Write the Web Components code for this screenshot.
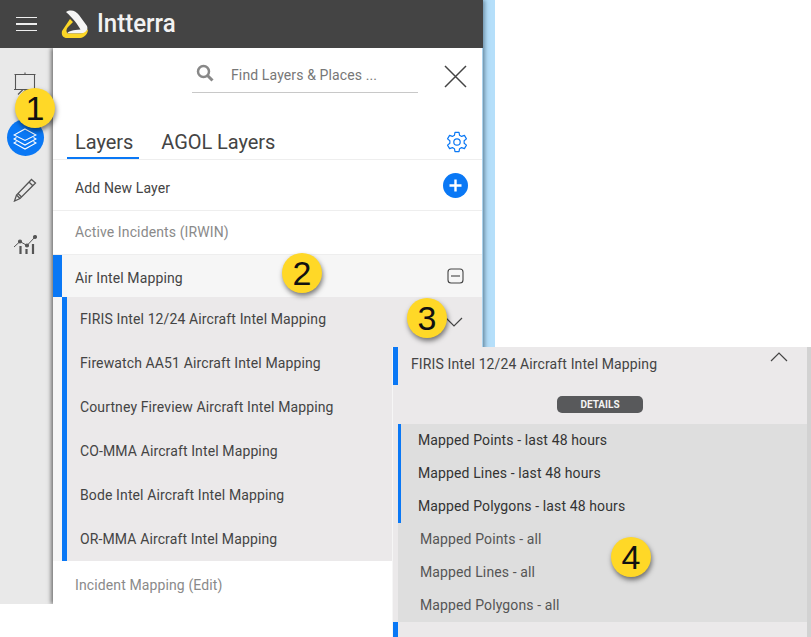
<!DOCTYPE html>
<html>
<head>
<meta charset="utf-8">
<title>Intterra layers</title>
<style>
  html, body { margin: 0; padding: 0; background: #fff; }
  body { font-family: Roboto, "Liberation Sans", sans-serif; width: 811px; height: 637px; overflow: hidden; position: relative; }
</style>
</head>
<body>
<app-shell>
  <top-bar></top-bar>
  <div slot="rail"><side-rail></side-rail></div>
  <layers-panel slot="panel"></layers-panel>
</app-shell>
<layer-details></layer-details>
<note-badge style="left:15px;top:88px">1</note-badge>
<note-badge style="left:282px;top:253px">2</note-badge>
<note-badge style="left:407px;top:298px">3</note-badge>
<note-badge style="left:611px;top:537px">4</note-badge>

<script>
class AppShell extends HTMLElement {
  constructor() {
    super();
    this.attachShadow({ mode: "open" }).innerHTML = `
      <style>
        :host { display: block; width: 495px; height: 604px; background: #b5dffa; overflow: hidden; }
        .app { width: 483px; height: 604px; display: flex; flex-direction: column; box-shadow: 2px 0 4px rgba(40, 70, 90, .5); }
        .body { flex: 1; display: flex; min-height: 0; }
        ::slotted([slot="rail"]) { width: 53px; flex: none; }
        ::slotted([slot="panel"]) { flex: 1; min-width: 0; }
      </style>
      <div class="app">
        <slot></slot>
        <div class="body"><slot name="rail"></slot><slot name="panel"></slot></div>
      </div>`;
  }
}

class TopBar extends HTMLElement {
  constructor() {
    super();
    this.attachShadow({ mode: "open" }).innerHTML = `
      <style>
        :host { display: flex; align-items: center; height: 48px; background: #444; flex: none; position: relative; z-index: 1; }
        .burger { width: 21px; height: 15px; margin-left: 16px; display: flex; flex-direction: column; justify-content: space-between; }
        .burger i { display: block; height: 1.4px; background: #eee; }
        svg { margin-left: 24px; display: block; }
        .name { margin-left: 8px; color: #f2f2f2; font: 500 26px/48px Roboto, sans-serif; position: relative; top: -1px; transform: scaleX(.925); transform-origin: left center; }
      </style>
      <div class="burger"><i></i><i></i><i></i></div>
      <svg width="28" height="30" viewBox="61 8 28 30">
        <path fill="#f5f5f5" d="M66 11C71 8 76 10 79 14L87 25C88.500 29 85.500 32.500 82 32.500L67 32.500C69 30 73 28.800 80.500 28.500C78 24 73 17 66 11Z"/>
        <path fill="#fbd626" d="M70 18L62 30C61 34.500 63.500 37 67 37L80 37C85 36.500 88 32.500 88 28C86 31 83 32.500 80 32.500L67.500 32.500C66 30.500 66 28.500 68 26L73 21Z"/>
      </svg>
      <div class="name">Intterra</div>`;
  }
}

class SideRail extends HTMLElement {
  constructor() {
    super();
    this.attachShadow({ mode: "open" }).innerHTML = `
      <style>
        :host { display: flex; flex-direction: column; align-items: center; height: 556px; background: #e9e9e9; position: relative; }
        .slot { width: 37px; height: 37px; margin-left: -3px; display: flex; align-items: center; justify-content: center; }
        .first { margin-top: 16px; }
        .on { margin-top: 18px; background: #0a78f5; border-radius: 50%; }
        .pencil { margin-top: 15px; }
        .chart { margin-top: 17px; }
        svg { display: block; fill: none; stroke: #555; stroke-width: 1.1; }
      </style>
      <div class="slot first">
        <svg width="24" height="24" viewBox="0 0 24 24"><path d="M1.500 3.500H22.500M2.500 3.500V18.500H21.500V3.500M12 1.500V3.500M1 18.500H23M10 18.500L5 23.500M13 18.500L9 23"/></svg>
      </div>
      <div class="slot on">
        <svg width="24" height="24" viewBox="0 0 24 24" style="stroke:#fff"><path d="M12 3L23 9L12 14.500L1 9ZM3.500 11.500L1 13L12 19L23 13L20.500 11.500M3.500 15.500L1 17L12 23L23 17L20.500 15.500"/></svg>
      </div>
      <div class="slot pencil">
        <svg width="24" height="24" viewBox="0 0 24 24"><path d="M18.500 1.500L22.500 5L7 20.500L1.500 23L3.500 17ZM16 4L20 8M3.500 17L7 20.500M5 15.500L8.500 19" stroke-width="1.300"/></svg>
      </div>
      <div class="slot chart">
        <svg width="24" height="24" viewBox="0 0 24 24"><path d="M1 15L7 9.500L14 13.500L22 5" stroke-width="1"/><circle cx="7" cy="9.500" r="1.500" fill="#555"/><circle cx="14" cy="13.500" r="1.500" fill="#555"/><circle cx="22" cy="5" r="1.500" fill="#555"/><path d="M7.500 14V22M13.500 17V22M20 12V22" stroke-width="2.200"/></svg>
      </div>`;
  }
}

class LayersPanel extends HTMLElement {
  constructor() {
    super();
    const subs = ["FIRIS Intel 12/24 Aircraft Intel Mapping", "Firewatch AA51 Aircraft Intel Mapping", "Courtney Fireview Aircraft Intel Mapping", "CO-MMA Aircraft Intel Mapping", "Bode Intel Aircraft Intel Mapping", "OR-MMA Aircraft Intel Mapping"];
    this.attachShadow({ mode: "open" }).innerHTML = `
      <style>
        :host { display: block; background: #fff; color: #444; font: 14px/20px Roboto, sans-serif; letter-spacing: .12px; box-shadow: -2px 0 4px rgba(0,0,0,.5); position: relative; height: 556px; margin-right: 1px; }
        .search-row { height: 63px; display: flex; align-items: flex-start; }
        .search { margin: 9px 0 0 139px; width: 226px; height: 35px; border-bottom: 1px solid #c8c8c8; display: flex; align-items: center; color: #777; }
        .search svg { margin: 0 0 4px 4px; }
        .search span { margin: 0 0 0 17px; }
        .close { margin: 17px 0 0 26px; }
        .tabs { height: 48px; display: flex; align-items: flex-end; border-bottom: 1px solid #eee; font-size: 20px; letter-spacing: -.05px; line-height: 28px; }
        .tab { padding: 0 8px 3px; color: #444; height: 28px; margin-left: 14px; }
        .tab.on { border-bottom: 2px solid #0a78f5; padding: 0 6px 2px 8px; height: 27px; }
        .gear { margin: 0 14px 6px auto; }
        .row { display: flex; align-items: center; padding-left: 22px; border-bottom: 1px solid #eee; }
        .add { height: 50px; color: #444; }
        .add span { position: relative; top: 3px; }
        .add svg { margin: 0 14px 0 auto; }
        .muted { color: #8a8a8a; }
        .active { height: 43px; }
        .active span { position: relative; top: -1px; }
        .air { height: 42px; background: #f6f6f6; border-bottom: 0; position: relative; }
        .air::before { content: ""; position: absolute; left: 0; top: 0; width: 9px; height: 100%; background: #0a78f5; }
        .air svg { margin: 0 18px 0 auto; }
        .air span { position: relative; top: 2px; }
        .list { padding-left: 9px; background: #f6f6f6; }
        .item { height: 44px; display: flex; align-items: center; padding-left: 13px; background: #ebe9ea; border-left: 5px solid #0a78f5; position: relative; }
        .item svg { position: absolute; left: 378px; top: 20px; }
        .incident { height: 43px; border: 0; }
        .incident span { position: relative; top: 2px; }
      </style>
      <div class="search-row">
        <div class="search">
          <svg width="18" height="18" viewBox="0 0 18 18" fill="none" stroke="#888"><circle cx="7.500" cy="7.500" r="5.500" stroke-width="2.500"/><path d="M11.500 11.500L16.500 16.500" stroke-width="3"/></svg>
          <span>Find Layers &amp; Places ...</span>
        </div>
        <svg class="close" width="23" height="23" viewBox="0 0 23 23" stroke="#444" stroke-width="1.500"><path d="M1 1L22 22M22 1L1 22"/></svg>
      </div>
      <div class="tabs">
        <div class="tab on">Layers</div>
        <div class="tab">AGOL Layers</div>
        <svg class="gear" width="22" height="22" viewBox="0 0 24 24" fill="none" stroke="#0a78f5" stroke-width="1.300"><circle cx="12" cy="12" r="3.500"/><path d="M9.800 1.500H14.200L14.800 4.700L17 5.900L20.100 4.800L22.300 8.600L19.800 10.700V13.300L22.300 15.400L20.100 19.200L17 18.100L14.800 19.300L14.200 22.500H9.800L9.200 19.300L7 18.100L3.900 19.200L1.700 15.400L4.200 13.300V10.700L1.700 8.600L3.900 4.800L7 5.900L9.200 4.700Z" stroke-linejoin="round"/></svg>
      </div>
      <div class="row add">
        <span>Add New Layer</span>
        <svg width="25" height="25" viewBox="0 0 25 25"><circle cx="12.500" cy="12.500" r="12.500" fill="#0a78f5"/><path d="M12.500 6.500V18.500M6.500 12.500H18.500" stroke="#fff" stroke-width="2.400"/></svg>
      </div>
      <div class="row active muted"><span>Active Incidents (IRWIN)</span></div>
      <div class="row air">
        <span>Air Intel Mapping</span>
        <svg width="17" height="16" viewBox="0 0 17 16" fill="none" stroke="#444" stroke-width="1.100"><rect x="1" y="1" width="15" height="14" rx="3"/><path d="M4 8H13"/></svg>
      </div>
      <div class="list">
        ${subs.map((s, i) => `<div class="item"><span>${s}</span>${i === 0 ? `<svg width="18" height="10" viewBox="0 0 18 10" fill="none" stroke="#444" stroke-width="1.200"><path d="M1 1L9 9L17 1"/></svg>` : ""}</div>`).join("")}
      </div>
      <div class="row incident muted"><span>Incident Mapping (Edit)</span></div>`;
  }
}

class LayerDetails extends HTMLElement {
  constructor() {
    super();
    const recent = ["Mapped Points - last 48 hours", "Mapped Lines - last 48 hours", "Mapped Polygons - last 48 hours"];
    const all = ["Mapped Points - all", "Mapped Lines - all", "Mapped Polygons - all"];
    this.attachShadow({ mode: "open" }).innerHTML = `
      <style>
        :host { display: block; position: absolute; left: 393px; top: 347px; width: 418px; height: 290px; box-sizing: border-box; padding-right: 4px; background: #d2d2d2; color: #444; font: 14px/20px Roboto, sans-serif; letter-spacing: .12px; box-shadow: -1px 0 0 #f6f6f6; }
        .inner { height: 100%; background: #ebe9ea; position: relative; }
        .head { height: 38px; border-left: 5px solid #0a78f5; padding-left: 13px; display: flex; align-items: center; box-sizing: border-box; }
        .head span { position: relative; top: -2px; }
        .head svg { position: absolute; left: 377px; top: 5px; }
        .bar { height: 39px; display: flex; align-items: flex-start; justify-content: center; padding-top: 11px; box-sizing: border-box; }
        .details { width: 86px; height: 17px; background: #58595b; color: #f4f4f4; border-radius: 5px; font: 700 10px/17px Roboto, sans-serif; letter-spacing: 0; text-align: center; }
        .group { margin-left: 5px; background: #dedede; height: 198px; }
        .recent { border-left: 3px solid #0a78f5; color: #333; }
        .line { height: 33px; display: flex; align-items: center; padding-left: 17px; }
        .line span { position: relative; top: -1px; }
        .all { color: #555; }
        .all .line { padding-left: 22px; }
        .foot { height: 15px; width: 5px; background: #0a78f5; }
      </style>
      <div class="inner">
        <div class="head">
          <span>FIRIS Intel 12/24 Aircraft Intel Mapping</span>
          <svg width="18" height="10" viewBox="0 0 18 10" fill="none" stroke="#444" stroke-width="1.200"><path d="M1 9L9 1L17 9"/></svg>
        </div>
        <div class="bar"><div class="details">DETAILS</div></div>
        <div class="group">
          <div class="recent">${recent.map(t => `<div class="line"><span>${t}</span></div>`).join("")}</div>
          <div class="all">${all.map(t => `<div class="line"><span>${t}</span></div>`).join("")}</div>
        </div>
        <div class="foot"></div>
      </div>`;
  }
}

class NoteBadge extends HTMLElement {
  constructor() {
    super();
    this.attachShadow({ mode: "open" }).innerHTML = `
      <style>
        :host { display: flex; align-items: center; justify-content: center; position: absolute; width: 40px; height: 40px; border-radius: 50%; background: #ffd827; color: #111; font: 34px/40px "Liberation Sans", sans-serif; box-shadow: 1px 3px 5px rgba(0,0,0,.5); }
      </style>
      <slot></slot>`;
  }
}

customElements.define("app-shell", AppShell);
customElements.define("top-bar", TopBar);
customElements.define("side-rail", SideRail);
customElements.define("layers-panel", LayersPanel);
customElements.define("layer-details", LayerDetails);
customElements.define("note-badge", NoteBadge);
</script>
</body>
</html>
